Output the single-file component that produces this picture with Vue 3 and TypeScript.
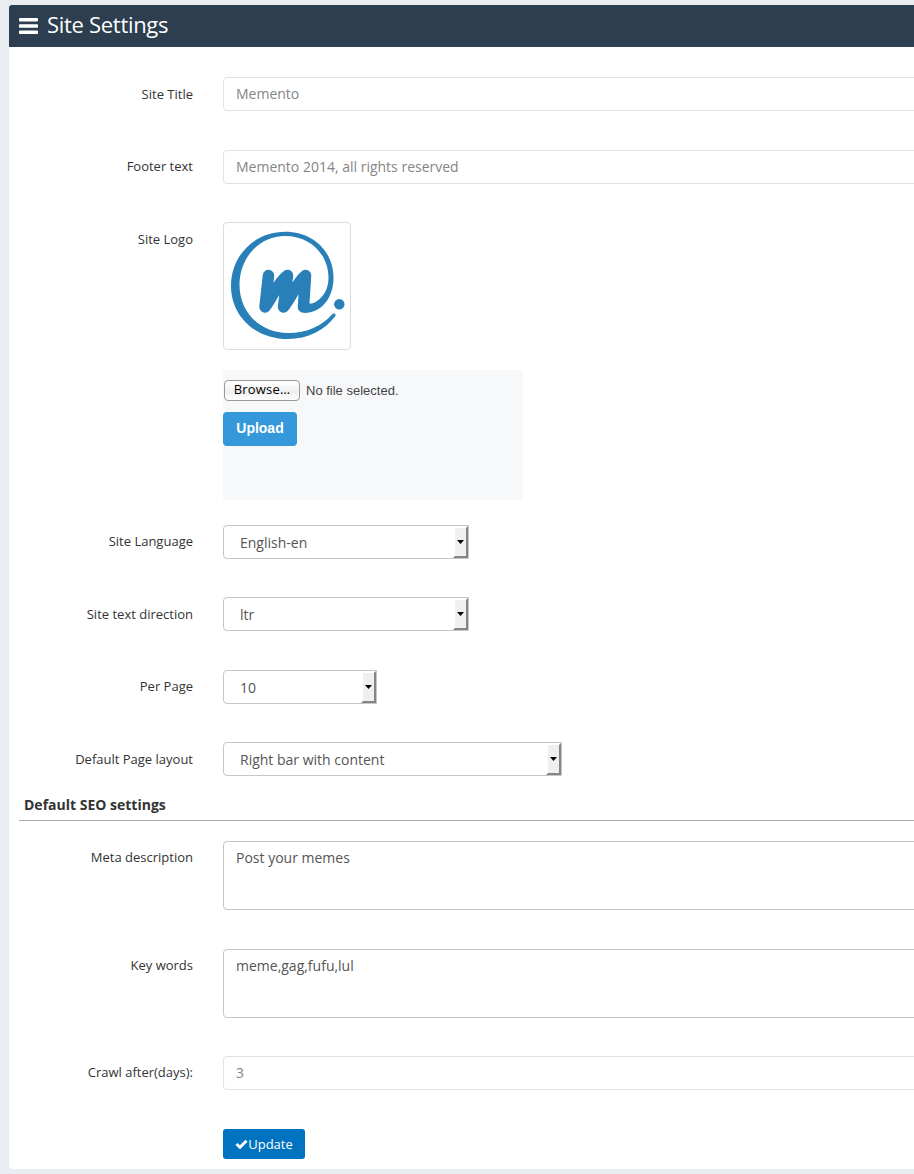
<script setup lang="ts">
import { ref } from 'vue'

interface SelectRow {
  label: string
  value: string
  size: string
}

const siteTitle = ref('Memento')
const footerText = ref('Memento 2014, all rights reserved')
const description = ref('Post your memes')
const keywords = ref('meme,gag,fufu,lul')
const crawlDays = ref('3')

const selects: SelectRow[] = [
  { label: 'Site Language', value: 'English-en', size: 'medium' },
  { label: 'Site text direction', value: 'ltr', size: 'medium' },
  { label: 'Per Page', value: '10', size: 'small' },
  { label: 'Default Page layout', value: 'Right bar with content', size: 'large' },
]
</script>

<template>
  <main class="page">
    <section class="panel">
      <header class="head">
        <svg class="bars" width="19" height="16" viewBox="0 0 19 16">
          <rect width="19" height="3.4" rx="0.8" />
          <rect y="6.3" width="19" height="3.4" rx="0.8" />
          <rect y="12.6" width="19" height="3.4" rx="0.8" />
        </svg>
        <h1>Site Settings</h1>
      </header>

      <form class="form" @submit.prevent>
        <div class="row tall">
          <label>Site Title</label>
          <input v-model="siteTitle" class="field" type="text" />
        </div>
        <div class="row raised">
          <label>Footer text</label>
          <input v-model="footerText" class="field" type="text" />
        </div>
        <div class="row logo-row">
          <label>Site Logo</label>
          <div class="logo-col">
            <div class="thumb">
              <svg width="126" height="126" viewBox="1 1 126 126">
                <path
                  class="fill"
                  d="M112 94.500 C102 108 85 117 65 117 C32 117 8 94 8 64 C8 33 32 9.7 62 9.7 C91 9.7 110.500 30 110.500 56 C110.500 74 100 91 81 91 L80 81.500 L89 81.500 C99 78 105.500 68 105.500 56 C105.500 32 87 14 62 14 C36 14 16.500 36 16.500 63 C16.500 90 37 111 65 111 C84 111 99 104 109.500 92 C111.500 90.500 113.500 92 112 94.500Z"
                />
                <path class="mark" d="M45.500 53.500 L42 85 C49 76 55 60 64.500 53.500 L60.500 85 C68 76 74 60 82.500 53.500 L80.500 85" />
                <circle class="fill" cx="116.300" cy="82.300" r="5.200" />
              </svg>
            </div>
            <div class="uploader">
              <div class="file">
                <button type="button" class="browse">Browse…</button>
                <span>No file selected.</span>
              </div>
              <button type="button" class="upload">Upload</button>
            </div>
          </div>
        </div>
        <div v-for="(item, i) in selects" :key="item.label" class="row" :class="{ odd: i % 2 === 0, raised: i % 2 === 0, last: i === 3 }">
          <label>{{ item.label }}</label>
          <div class="select" :class="item.size">
            <span>{{ item.value }}</span>
            <i class="arrow"><svg width="7" height="4" viewBox="0 0 7 4"><path d="M0 0H7L3.500 4Z" /></svg></i>
          </div>
        </div>

        <h2>Default SEO settings</h2>

        <div class="row area raised">
          <label>Meta description</label>
          <textarea v-model="description" class="field dark"></textarea>
        </div>
        <div class="row area second raised">
          <label>Key words</label>
          <textarea v-model="keywords" class="field dark"></textarea>
        </div>
        <div class="row tall raised">
          <label>Crawl after(days):</label>
          <input v-model="crawlDays" class="field" type="text" />
        </div>
        <button type="submit" class="update">
          <svg width="13" height="10" viewBox="0 0 13 10"><path d="M1.500 5 L5 8.300 L11.500 1.700" /></svg>
          <span>Update</span>
        </button>
      </form>
    </section>
  </main>
</template>

<style>
body {
  margin: 0;
  background: #e9edf1;
}
</style>

<style scoped>
* {
  box-sizing: border-box;
}
.page {
  height: 1174px;
  padding: 5px 0 5px 9px;
  overflow: hidden;
  background: #e9edf1;
  font-family: "Open Sans", sans-serif;
  color: #333;
}
.panel {
  height: 1164px;
  background: #fff;
  border-radius: 4px 0 0 4px;
}
.head {
  display: flex;
  align-items: center;
  height: 42px;
  padding: 0 0 4px 10px;
  gap: 9px;
  background: #2c3e50;
  border-radius: 3px 0 0 0;
}
.bars {
  fill: #fff;
  margin-top: 3px;
}
h1 {
  margin: 0;
  color: #fff;
  font-size: 22px;
  font-weight: 400;
  line-height: 30px;
  letter-spacing: -0.3px;
}
.form {
  padding-top: 30px;
}
.row {
  display: flex;
  align-items: flex-start;
  height: 72px;
}
.row.tall {
  height: 73px;
}
.row.odd {
  height: 72px;
}
.row.odd + .row {
  height: 73px;
}
.row.logo-row {
  height: 303px;
}
.row.last.last {
  height: 53px;
}
.row.area {
  height: 108px;
}
.row.area.second {
  height: 107px;
}
label {
  flex: 0 0 184px;
  margin-right: 30px;
  padding-top: 8px;
  text-align: right;
  font-size: 13px;
  line-height: 18px;
}
.raised label {
  padding-top: 7px;
}
.field {
  flex: 1;
  min-width: 0;
  height: 34px;
  margin-right: -10px;
  padding: 5px 12px 7px;
  border: 1px solid #e2e2e4;
  border-radius: 4px;
  background: #fff;
  color: #858585;
  font: 14px/20px "Open Sans", sans-serif;
  outline: none;
}
.field.dark {
  height: 69px;
  padding: 6px 12px;
  border-color: #c6c6c6;
  color: #555;
  resize: none;
  overflow: hidden;
}
.logo-col {
  width: 300px;
}
.thumb {
  width: 128px;
  height: 128px;
  border: 1px solid #ddd;
  border-radius: 4px;
}
.thumb svg {
  display: block;
}
.fill {
  fill: #2980b9;
}
.mark {
  fill: none;
  stroke: #2980b9;
  stroke-width: 11.5;
  stroke-linecap: round;
  stroke-linejoin: round;
}
.uploader {
  height: 130px;
  margin-top: 20px;
  padding-top: 10px;
  background: #f7f8fa;
}
.file {
  display: flex;
  align-items: center;
  height: 21px;
  margin-left: 1px;
  gap: 6px;
  font: 13px "Liberation Sans", sans-serif;
  color: #444;
}
.browse {
  width: 76px;
  height: 21px;
  padding: 0 0 2px;
  border: 1px solid #999;
  border-radius: 4px;
  background: linear-gradient(#fff, #f3f3f3 50%, #ececec 51%, #fff);
  color: #000;
  font: 500 13px/17px "Open Sans", sans-serif;
  letter-spacing: 0.2px;
}
.upload {
  display: block;
  width: 74px;
  height: 34px;
  margin-top: 11px;
  padding: 0 0 2px;
  border: 0;
  border-radius: 4px;
  background: #3498db;
  color: #fff;
  font: bold 14px "Liberation Sans", sans-serif;
}
.select {
  display: flex;
  justify-content: space-between;
  height: 34px;
  padding-left: 16px;
  border: 1px solid #c6c6c6;
  border-radius: 4px 0 0 4px;
  font-size: 14px;
  line-height: 34px;
  color: #555;
}
.select.small {
  width: 154px;
}
.select.medium {
  width: 246px;
}
.select.large {
  width: 339px;
}
.arrow {
  display: flex;
  align-items: center;
  justify-content: center;
  width: 15px;
  height: 32px;
  padding-bottom: 1px;
  border: 2px solid;
  border-color: #fff #858585 #858585 #fff;
  background: #efefef;
}
.arrow svg {
  flex: none;
  fill: #000;
}
h2 {
  margin: 0 0 20px 10px;
  height: 26px;
  padding-left: 5px;
  border-bottom: 1px solid #aaa;
  font-size: 14px;
  font-weight: 700;
  line-height: 20px;
}
.update {
  display: flex;
  align-items: center;
  justify-content: center;
  width: 82px;
  height: 30px;
  margin-left: 214px;
  padding: 0;
  border: 0;
  border-radius: 3px;
  background: #0073c0;
  color: #fff;
  font: 13px/18px "Open Sans", sans-serif;
}
.update svg {
  fill: none;
  stroke: #fff;
  stroke-width: 3;
}
</style>
